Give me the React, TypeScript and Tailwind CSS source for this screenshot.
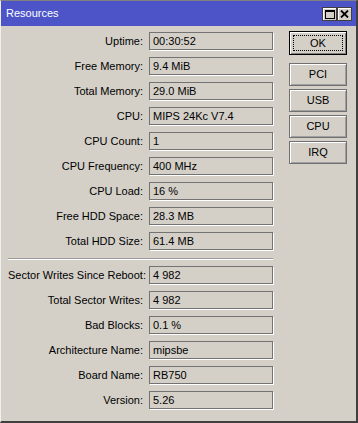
import React from "react";

const topRows = [
  { label: "Uptime:", value: "00:30:52" },
  { label: "Free Memory:", value: "9.4 MiB" },
  { label: "Total Memory:", value: "29.0 MiB" },
  { label: "CPU:", value: "MIPS 24Kc V7.4" },
  { label: "CPU Count:", value: "1" },
  { label: "CPU Frequency:", value: "400 MHz" },
  { label: "CPU Load:", value: "16 %" },
  { label: "Free HDD Space:", value: "28.3 MB" },
  { label: "Total HDD Size:", value: "61.4 MB" },
];

const bottomRows = [
  { label: "Sector Writes Since Reboot:", value: "4 982" },
  { label: "Total Sector Writes:", value: "4 982" },
  { label: "Bad Blocks:", value: "0.1 %" },
  { label: "Architecture Name:", value: "mipsbe" },
  { label: "Board Name:", value: "RB750" },
  { label: "Version:", value: "5.26" },
];

const Row = ({ label, value }: { label: string; value: string }) => (
  <div className="flex items-center h-[18px]">
    <span className="w-[135px] text-right whitespace-nowrap">{label}</span>
    <div className="ml-[6px] w-[124px] h-[18px] border border-[#737373] shadow-[1px_1px_0_#ffffff] flex items-center px-[3px] whitespace-nowrap">
      {value}
    </div>
  </div>
);

const SideButton = ({ text, focused }: { text: string; focused?: boolean }) => (
  <button
    className={
      focused
        ? "w-[58px] h-[24px] border border-black bg-[#d4d0c8] p-[3px] shadow-[inset_1px_1px_0_#ffffff,inset_-1px_-1px_0_#808080]"
        : "w-[58px] h-[23px] border border-[#707070] bg-[#d4d0c8] shadow-[inset_1px_1px_0_#ffffff,inset_-1px_-1px_0_#a0a0a0]"
    }
  >
    {focused ? (
      <div className="w-full h-full border border-dotted border-black flex items-center justify-center">
        {text}
      </div>
    ) : (
      text
    )}
  </button>
);

const App = () => {
  return (
    <div
      className="w-[358px] h-[423px] bg-[#d4d0c8] border-t border-l border-t-[#808080] border-l-[#f0f0f0] border-r-2 border-b-2 border-r-[#404040] border-b-[#404040] text-[11px] text-black flex flex-col"
      style={{ fontFamily: '"Liberation Sans", Arial, sans-serif' }}
    >
      {/* title bar */}
      <div className="h-[25px] bg-[#4c54c8] flex items-center pl-[5px] pr-[4px]">
        <span className="text-white text-[11px] flex-1">Resources</span>
        <div className="flex mt-[1px]">
          <div className="w-[15px] h-[14px] bg-[#d4d0c8] border border-[#404040] shadow-[inset_1px_1px_0_#ffffff] flex items-center justify-center">
            <div className="w-[10px] h-[9px] border border-black border-t-2" />
          </div>
          <div className="w-[15px] h-[14px] bg-[#d4d0c8] border border-[#404040] shadow-[inset_1px_1px_0_#ffffff] flex items-center justify-center">
            <svg width="9" height="8" viewBox="0 0 9 8">
              <path d="M1 0.5 L8 7.5 M8 0.5 L1 7.5" stroke="#000" strokeWidth="1.8" />
            </svg>
          </div>
        </div>
      </div>

      {/* body */}
      <div className="flex pl-[7px] pt-[6px]">
        <div className="flex flex-col gap-[7px]">
          {topRows.map((r) => (
            <Row key={r.label} {...r} />
          ))}
          <div className="mt-[1px] -mb-[1px] w-[265px] h-[2px] border-t border-[#9a9a9a] border-b border-b-white" />
          {bottomRows.map((r) => (
            <Row key={r.label} {...r} />
          ))}
        </div>
        <div className="ml-[16px] -mt-[1px] flex flex-col gap-[3px]">
          <div className="mb-[5px]">
            <SideButton text="OK" focused />
          </div>
          <SideButton text="PCI" />
          <SideButton text="USB" />
          <SideButton text="CPU" />
          <SideButton text="IRQ" />
        </div>
      </div>
    </div>
  );
};

export default App;
